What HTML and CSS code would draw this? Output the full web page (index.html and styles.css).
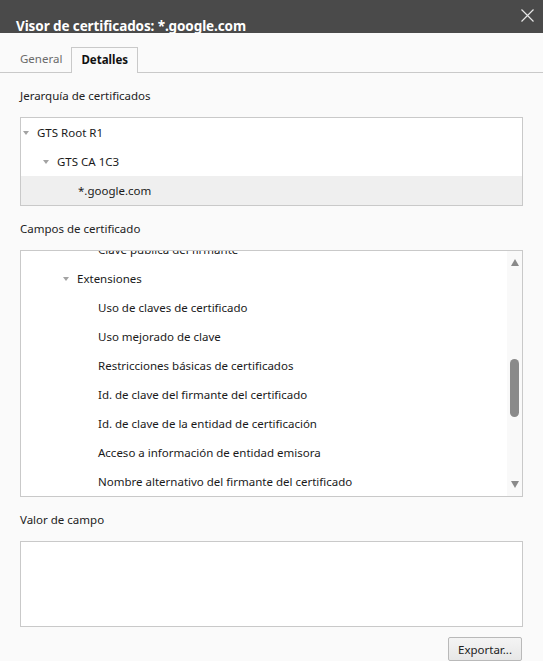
FILE: index.html
```html
<!DOCTYPE html>
<html lang="es">
<head>
<meta charset="utf-8">
<title>Visor de certificados</title>
<link rel="stylesheet" href="styles.css">
</head>
<body>
<div class="dialog">
  <div class="titlebar">
    <div class="title">Visor de certificados: *.google.com</div>
    <button class="close" aria-label="Cerrar">
      <svg width="13" height="13" viewBox="0 0 13 13"><path d="M0.5 0.5 L12.5 12.5 M12.5 0.5 L0.5 12.5" stroke="#e6e6e6" stroke-width="1.2" fill="none"/></svg>
    </button>
  </div>
  <div class="tabs">
    <div class="tab">General</div>
    <div class="tab active">Detalles</div>
  </div>
  <div class="content">
    <div class="label">Jerarquía de certificados</div>
    <div class="box tree">
      <div class="row lvl0"><span class="tri"></span>GTS Root R1</div>
      <div class="row lvl1"><span class="tri"></span>GTS CA 1C3</div>
      <div class="row lvl2 leaf selected">*.google.com</div>
    </div>

    <div class="label">Campos de certificado</div>
    <div class="box fields">
      <div class="list">
        <div class="list-inner">
          <div class="row lvl3 leaf">Clave pública del firmante</div>
          <div class="row lvl2"><span class="tri"></span>Extensiones</div>
          <div class="row lvl3 leaf">Uso de claves de certificado</div>
          <div class="row lvl3 leaf">Uso mejorado de clave</div>
          <div class="row lvl3 leaf">Restricciones básicas de certificados</div>
          <div class="row lvl3 leaf">Id. de clave del firmante del certificado</div>
          <div class="row lvl3 leaf">Id. de clave de la entidad de certificación</div>
          <div class="row lvl3 leaf">Acceso a información de entidad emisora</div>
          <div class="row lvl3 leaf">Nombre alternativo del firmante del certificado</div>
        </div>
      </div>
      <div class="scrollbar">
        <span class="arrow up"></span>
        <span class="thumb"></span>
        <span class="arrow down"></span>
      </div>
    </div>

    <div class="label">Valor de campo</div>
    <div class="box value"></div>

    <div class="actions">
      <button class="btn">Exportar...</button>
    </div>
  </div>
</div>
</body>
</html>
```

FILE: styles.css
```css
* { box-sizing: border-box; }

html, body {
  margin: 0;
  padding: 0;
  background: #fafafa;
}

body {
  font-family: "Noto Sans", "Open Sans", sans-serif;
  font-size: 11.5px;
  color: #1f1f1f;
  width: 543px;
  height: 661px;
  overflow: hidden;
}

.titlebar {
  height: 33px;
  background: #4a4a4a;
  display: flex;
  justify-content: space-between;
  align-items: flex-start;
  padding-left: 16px;
}

.title {
  color: #ffffff;
  font-weight: bold;
  font-size: 13.5px;
  line-height: 18px;
  margin-top: 17px;
  letter-spacing: -0.1px;
}

.close {
  border: 0;
  background: transparent;
  padding: 0;
  margin: 9px 9px 0 0;
  width: 13px;
  height: 13px;
  display: flex;
}

.tabs {
  margin-top: 14px;
  height: 26px;
  border-bottom: 1px solid #c9c9c9;
  display: flex;
  padding-left: 20px;
}

.tab {
  height: 26px;
  line-height: 24px;
  color: #6b6b6b;
  padding-right: 9px;
}

.tab.active {
  color: #111;
  font-weight: bold;
  background: #fafafa;
  border: 1px solid #c9c9c9;
  border-bottom: 0;
  height: 26px;
  padding: 0 9px;
}

.content {
  padding: 0 20px;
}

.label {
  padding-top: 15px;
  height: 31px;
  line-height: 16px;
  margin-bottom: 13px;
  color: #222;
}

.box {
  background: #ffffff;
  border: 1px solid #c9c9c9;
}

.row {
  height: 29px;
  line-height: 29px;
  display: flex;
  align-items: center;
  white-space: nowrap;
  color: #1a1a1a;
}

.tri {
  width: 0;
  height: 0;
  border-left: 3.5px solid transparent;
  border-right: 3.5px solid transparent;
  border-top: 4px solid #a3a3a3;
  margin-right: 8px;
}

.lvl0 { padding-left: 2px; }
.lvl1 { padding-left: 22px; }
.lvl2 { padding-left: 42px; }
.lvl3 { padding-left: 62px; }
.leaf { padding-left: calc(var(--lvl) * 20px + 17px); }
.lvl0.leaf { --lvl: 0; }
.lvl1.leaf { --lvl: 1; }
.lvl2.leaf { --lvl: 2; }
.lvl3.leaf { --lvl: 3; }

.selected { background: #efefef; }

.fields {
  height: 247px;
  display: flex;
}

.list {
  flex: 1;
  overflow: hidden;
}

.list-inner {
  margin-top: -16px;
}

.scrollbar {
  width: 15px;
  background: #f9f9f9;
  display: flex;
  flex-direction: column;
  align-items: center;
  padding: 8px 0;
}

.arrow {
  width: 0;
  height: 0;
  border-left: 4.5px solid transparent;
  border-right: 4.5px solid transparent;
}

.arrow.up { border-bottom: 7px solid #8a8a8a; }
.arrow.down { border-top: 7px solid #8a8a8a; margin-top: auto; }

.thumb {
  width: 9px;
  height: 58px;
  margin-top: 93px;
  border-radius: 4.5px;
  background: #8a8a8a;
}

.value {
  height: 86px;
}

.actions {
  display: flex;
  justify-content: flex-end;
  margin-top: 10px;
  padding-right: 1px;
}

.btn {
  width: 74px;
  height: 24px;
  font-family: inherit;
  font-size: 11.5px;
  color: #222;
  border: 1px solid #b9b9b9;
  border-radius: 2px;
  background: linear-gradient(#f4f4f4, #e7e7e7);
  padding: 0;
}
```
